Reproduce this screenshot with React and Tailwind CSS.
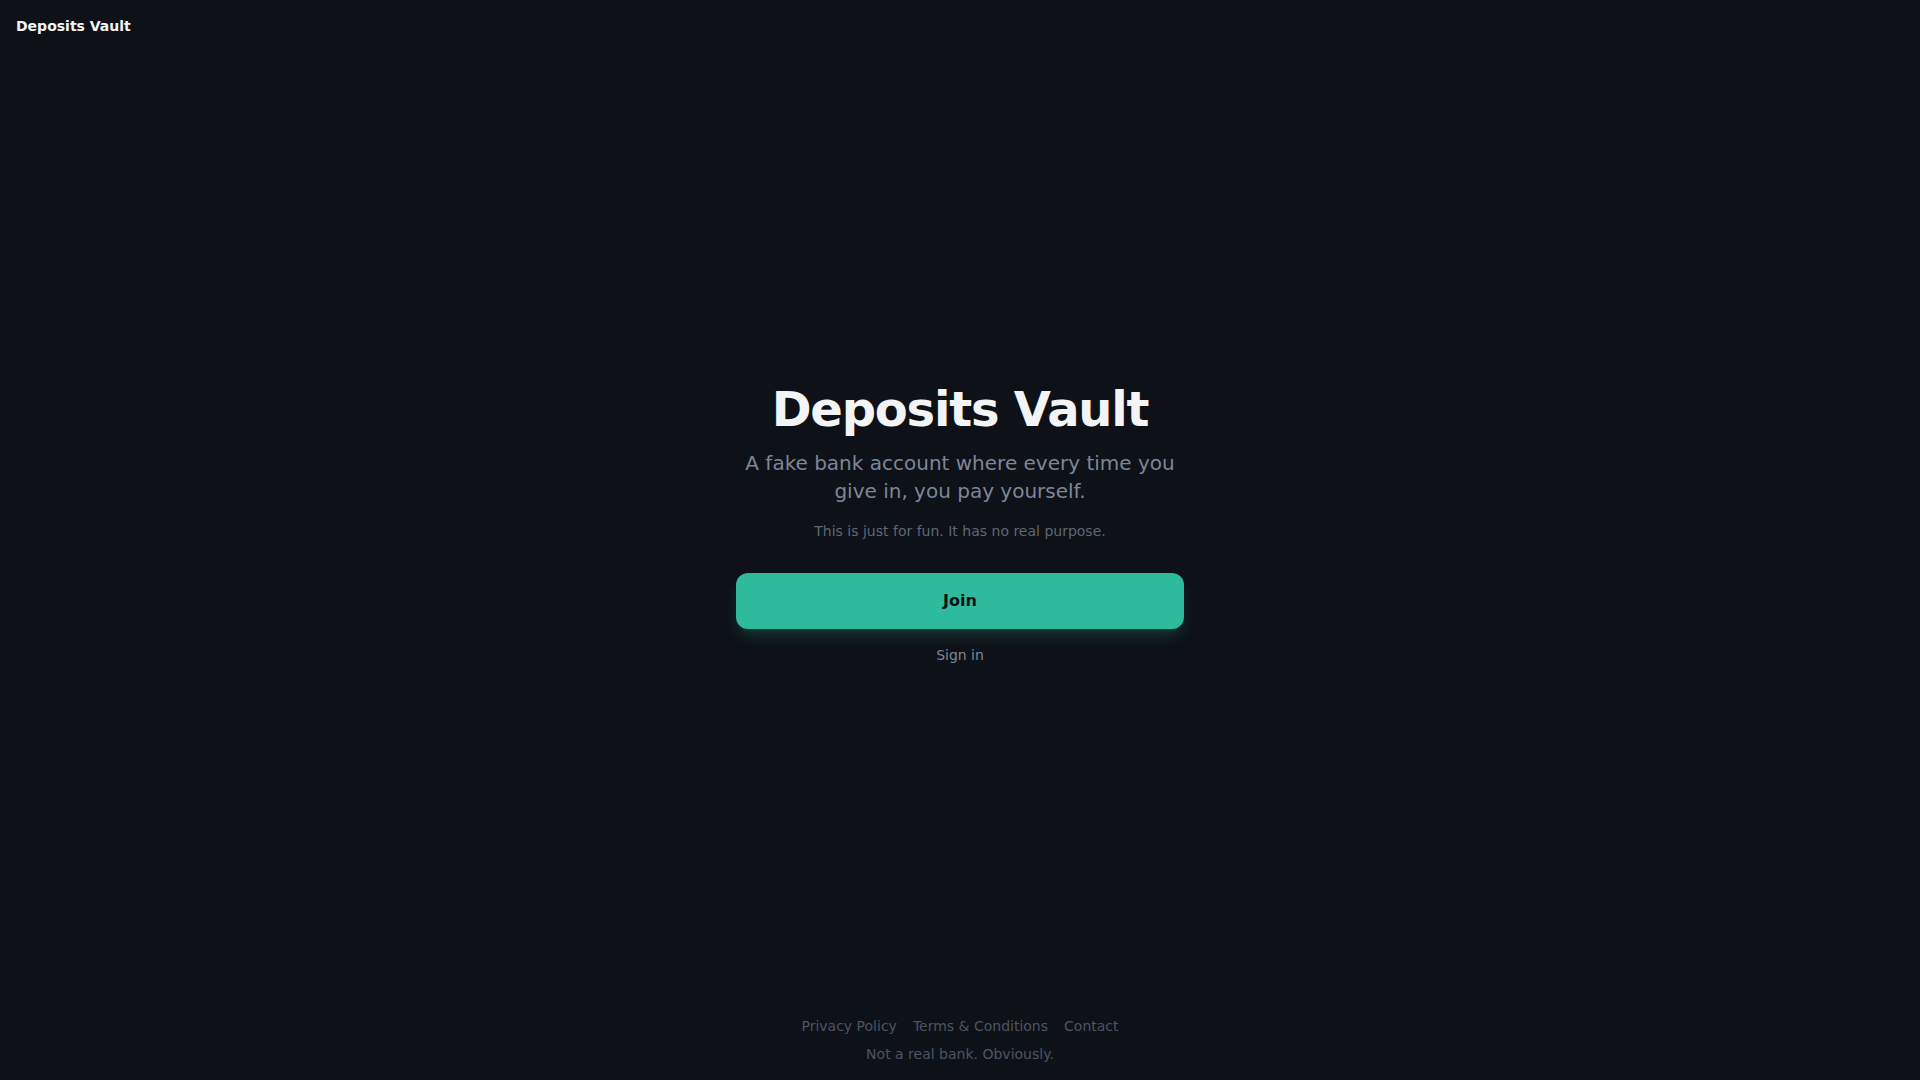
export default function App() {
  return (
    <div className="min-h-screen flex flex-col bg-[#0e1117] text-gray-100 font-['DejaVu_Sans',sans-serif]">
      <header className="px-4 py-4 text-sm font-bold text-gray-100">
        <div>Deposits Vault</div>
      </header>

      <main className="flex-1 flex flex-col items-center justify-center px-4 text-center">
        <h1 className="text-5xl leading-none font-bold tracking-tight text-[#f3f4f6]">Deposits Vault</h1>
        <p className="mt-4 max-w-md text-xl leading-7 text-[#7d8696]">
          A fake bank account where every time you give in, you pay yourself.
        </p>
        <p className="mt-4 text-sm text-[#5f6776]">This is just for fun. It has no real purpose.</p>

        <button className="mt-8 w-[448px] h-14 rounded-xl bg-[#2ebb9d] text-[#0e1117] font-bold shadow-lg shadow-[#2ebb9d]/20">
          Join
        </button>
        <a href="#" className="mt-4 text-sm text-[#7d8696]">
          Sign in
        </a>
      </main>

      <footer className="pt-[18px] pb-4 flex flex-col items-center text-sm text-[#4d5462]">
        <nav className="flex gap-4">
          <a href="#">Privacy Policy</a>
          <a href="#">Terms &amp; Conditions</a>
          <a href="#">Contact</a>
        </nav>
        <p className="mt-2">Not a real bank. Obviously.</p>
      </footer>
    </div>
  );
}
